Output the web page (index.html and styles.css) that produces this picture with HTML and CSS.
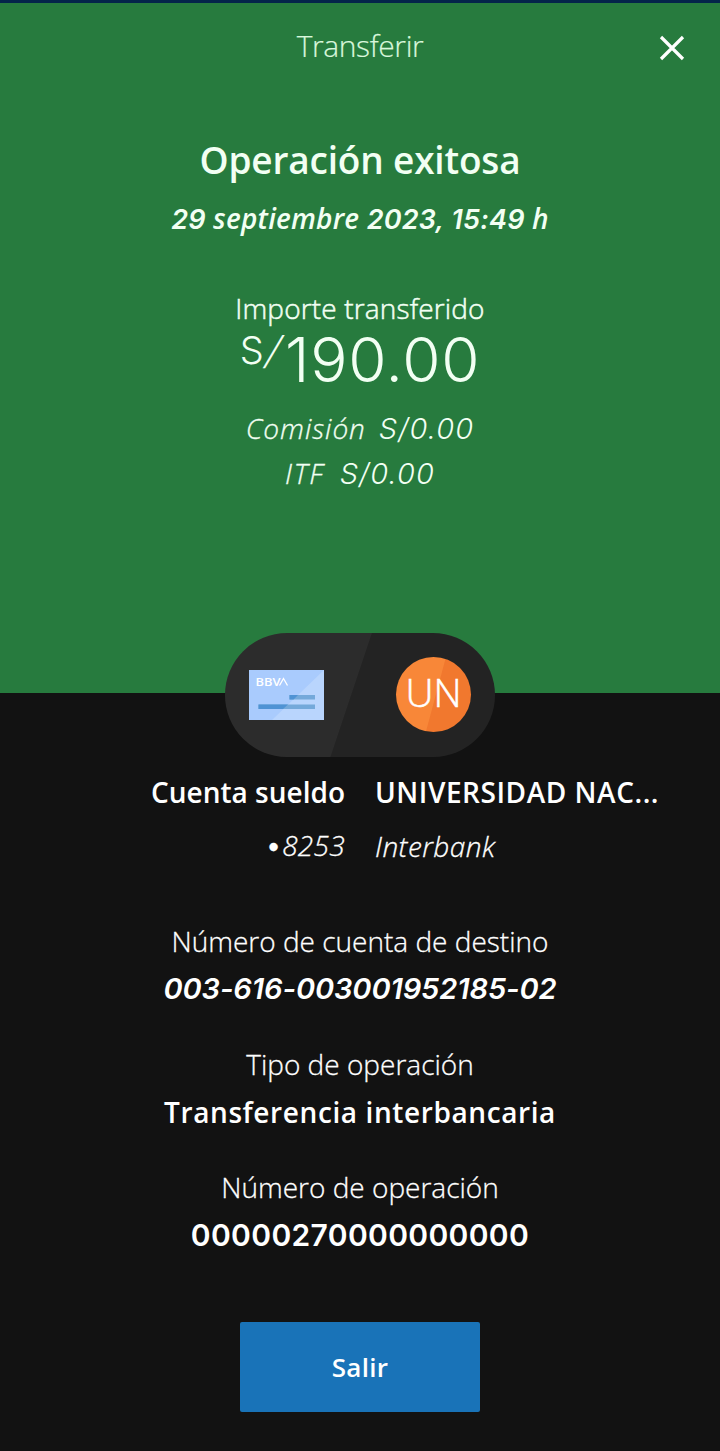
FILE: index.html
```html
<!DOCTYPE html>
<html lang="es">
<head>
<meta charset="utf-8">
<title>Transferir</title>
<link rel="stylesheet" href="styles.css">
</head>
<body>
<main class="screen">
  <section class="hero">
    <header class="bar">
      <span></span>
      <h1 class="bar-title">Transferir</h1>
      <button class="close" aria-label="Cerrar">
        <svg width="26" height="26" viewBox="0 0 26 26"><path d="M2 2 24 24M24 2 2 24" fill="none" stroke="#fff" stroke-width="3.200"/></svg>
      </button>
    </header>
    <h2 class="result">Operación exitosa</h2>
    <p class="date"><span class="num">29</span> septiembre <span class="num">2023</span>, <span class="num">15:49</span> h</p>
    <p class="line amount-label">Importe transferido</p>
    <p class="amount"><span class="currency">S<i>/</i></span><span class="figure">190.00</span></p>
    <p class="line fee"><span>Comisión</span><span class="fee-value">S/0.00</span></p>
    <p class="line fee itf"><span>ITF</span><span class="fee-value">S/0.00</span></p>
  </section>
  <section class="details">
    <div class="pill">
      <svg class="card" width="75" height="50" viewBox="0 0 75 50">
        <path d="M0 0H75V50H0Z" fill="#a9cbfd"/>
        <path d="M75 0V50H23Z" fill="#b9d5fd"/>
        <path d="M40.500 25H66V29.500H40.500ZM9.500 34.500H66V39H9.500Z" fill="#74a9da"/>
        <path d="M40.500 25H49L44.500 29.500H40.500ZM9.500 34.500H39L34 39H9.500Z" fill="#4f93d4"/>
        <text class="card-brand" x="6.500" y="15.500" textLength="25" lengthAdjust="spacingAndGlyphs">BBV</text>
        <path d="M30.500 15.500 34.500 8.500 38.500 15.500" fill="none" stroke="#fff" stroke-width="1.300"/>
      </svg>
      <span class="avatar">UN</span>
    </div>
    <div class="parties">
      <div class="from">
        <p class="name">Cuenta sueldo</p>
        <p class="sub"><span class="dot">•</span>8253</p>
      </div>
      <div class="to">
        <p class="name name-to">UNIVERSIDAD NAC...</p>
        <p class="sub bank">Interbank</p>
      </div>
    </div>
    <dl class="facts">
      <div class="fact"><dt>Número de cuenta de destino</dt><dd class="account">003-616-003001952185-02</dd></div>
      <div class="fact"><dt>Tipo de operación</dt><dd class="kind">Transferencia interbancaria</dd></div>
      <div class="fact"><dt>Número de operación</dt><dd class="number">00000270000000000</dd></div>
    </dl>
    <button class="exit">Salir</button>
  </section>
</main>
</body>
</html>
```

FILE: styles.css
```css
* { box-sizing: border-box; }
body { margin: 0; background: #121212; }
h1, h2, p, dl, dd { margin: 0; }
button { border: 0; padding: 0; background: none; font: inherit; color: inherit; }

.screen {
  width: 720px;
  height: 1451px;
  color: #fff;
  font-family: "Open Sans", "Noto Sans", sans-serif;
  font-size: 28px;
  line-height: 36px;
  white-space: nowrap;
  text-align: center;
  overflow: hidden;
}

.hero { height: 693px; background: #277b3e; border-top: 3px solid #04244a; color: #f2fff3; }
.bar { display: grid; grid-template-columns: 96px 1fr 96px; height: 85px; align-items: center; margin-bottom: 51px; }
.bar-title { font-size: 30px; font-weight: 300; color: #d9f7dc; letter-spacing: -0.400px; -webkit-text-stroke: 0.200px; }
.close { display: flex; justify-content: center; padding-top: 4px; }
.result { font-size: 37px; line-height: 42px; font-weight: 600; letter-spacing: -0.180px; }
.date { margin-top: 19px; font-style: italic; font-weight: 600; letter-spacing: 0.200px; }
.num { font-family: Inter, sans-serif; font-size: 27px; line-height: 1; }
.line { font-weight: 300; -webkit-text-stroke: 0.500px; }
.amount-label { margin-top: 54px; letter-spacing: 0.150px; }
.amount { display: flex; justify-content: center; gap: 2px; height: 48px; font-family: Inter, sans-serif; font-weight: 300; }
.currency { font-size: 38px; line-height: 48px; letter-spacing: 0.500px; }
.currency i { display: inline-block; transform: skewX(-9deg); margin: 0 2px 0 3px; }
.figure { padding-top: 10px; font-size: 62px; line-height: 48px; letter-spacing: 0.700px; }
.fee { display: flex; justify-content: center; align-items: baseline; gap: 13px; height: 36px; margin-top: 36px; font-style: italic; letter-spacing: 0.950px; -webkit-text-stroke: 0.300px; }
.fee-value { font-family: Inter, sans-serif; font-size: 29px; font-weight: 300; letter-spacing: 1.100px; -webkit-text-stroke: 0; }
.itf { gap: 15px; margin-top: 9px; letter-spacing: 1.800px; }

.details { display: flex; flex-direction: column; align-items: center; background: #121212; }
.pill {
  display: flex;
  justify-content: space-between;
  align-items: center;
  width: 270px;
  height: 124px;
  margin-top: -60px;
  padding: 0 24px 1px;
  border-radius: 62px;
  background: linear-gradient(108.500deg, #2c2c2c 47%, #232323 47.300%);
}
.card-brand { font: 600 10px "Open Sans", sans-serif; fill: #fff; }
.avatar {
  width: 75px;
  height: 75px;
  border-radius: 50%;
  background: linear-gradient(105deg, #f88738 52%, #f1782e 53%);
  font-size: 39px;
  font-weight: 300;
  line-height: 70px;
  -webkit-text-stroke: 0.500px;
}

.parties { display: grid; grid-template-columns: 345px 345px; column-gap: 30px; width: 720px; margin-top: 17px; }
.from { text-align: right; }
.to { text-align: left; }
.name { font-weight: 600; }
.name-to { letter-spacing: 0.550px; }
.sub { margin-top: 17px; font-style: italic; font-weight: 300; letter-spacing: 0.300px; -webkit-text-stroke: 0.300px; }
.dot { margin-right: 1px; font-family: Inter, sans-serif; font-style: normal; font-size: 26px; font-weight: 400; line-height: 1; vertical-align: 1px; }
.bank { margin-top: 18px; letter-spacing: 0.450px; }

.facts { margin-top: 59px; }
.fact { height: 123px; }
.fact dt { font-weight: 300; -webkit-text-stroke: 0.300px; }
.fact dd { margin-top: 12px; font-weight: 600; }
.fact .account { font-family: Inter, sans-serif; font-size: 29px; font-style: italic; letter-spacing: -0.070px; }
.kind { letter-spacing: 0.600px; }
.fact .number { font-family: Inter, sans-serif; font-size: 30px; letter-spacing: 0.350px; }
.exit { width: 240px; height: 90px; margin-top: 30px; border-radius: 2px; background: #1973b8; font-size: 26px; font-weight: 600; letter-spacing: 0.300px; line-height: 88px; }
```
